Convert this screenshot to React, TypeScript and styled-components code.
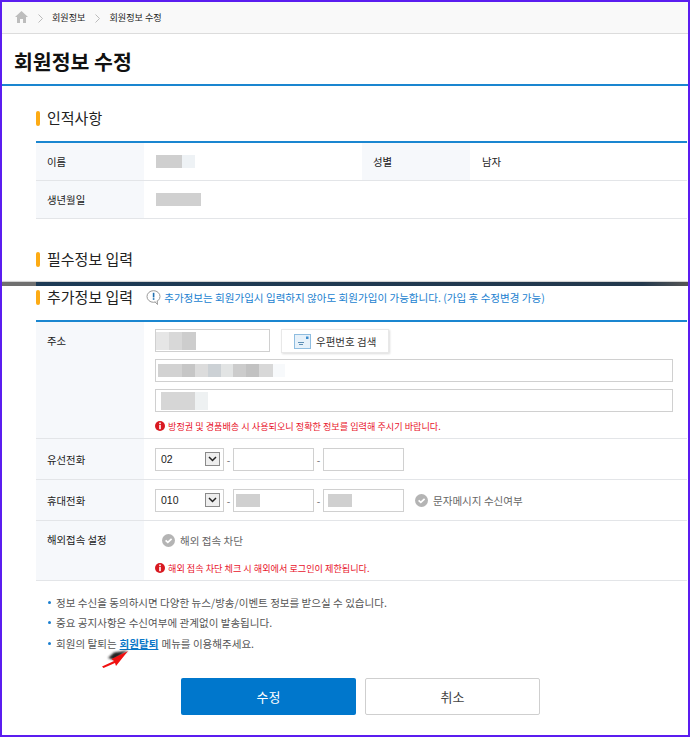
import React from "react";
import styled, { createGlobalStyle } from "styled-components";

const GlobalStyle = createGlobalStyle`
  html, body { margin: 0; padding: 0; background: #fff; }
  body { font-family: "Noto Sans CJK KR", "Noto Sans", sans-serif; color: #333; }
  * { box-sizing: border-box; }
`;

const Frame = styled.div`
  position: relative;
  width: 690px;
  height: 737px;
  border: 2px solid #5b1df0;
  overflow: hidden;
  background: #fff;
`;

const Breadcrumb = styled.nav`
  display: flex;
  align-items: center;
  height: 32px;
  padding: 0 0 1px 13px;
  background: #f9f9f9;
  border-bottom: 1px solid #dcdcdc;
  font-size: 9.1px;
  color: #222;
`;

const Chevron = styled.svg`
  width: 5px;
  height: 9px;
  margin: 2px 9px 0 10px;
`;

const TitleBar = styled.header`
  display: flex;
  align-items: center;
  height: 52px;
  padding: 3px 0 0 12px;
  border-bottom: 2px solid #1a86d0;
`;

const Title = styled.h1`
  margin: 0;
  font-size: 20.5px;
  font-weight: 700;
  color: #111;
`;

const Section = styled.section<{ $top: number }>`
  padding: ${(p) => p.$top}px 1px 0 34px;
`;

const HeadingRow = styled.div<{ $gap?: number }>`
  display: flex;
  align-items: center;
  height: 15px;
  margin-bottom: ${(p) => p.$gap ?? 15}px;
`;

const Heading = styled.h2`
  display: flex;
  align-items: center;
  margin: -2px 0 0;
  font-size: 15px;
  font-weight: 400;
  color: #222;
  &::before {
    content: "";
    width: 4px;
    height: 15px;
    margin: 2px 7px 0 0;
    border-radius: 2px;
    background: #fdab14;
  }
`;

const Hint = styled.span`
  display: flex;
  align-items: center;
  margin-left: 13px;
  font-size: 10.55px;
  color: #1a7fd0;
`;

const HintIcon = styled.svg`
  width: 15px;
  height: 15px;
  margin-right: 3px;
`;

const Table = styled.div`
  border-top: 2px solid #1a86d0;
`;

const Row = styled.div<{ $height: number }>`
  display: flex;
  height: ${(p) => p.$height}px;
  border-bottom: 1px solid #e3e5e8;
`;

const Label = styled.div<{ $top?: number }>`
  display: flex;
  align-items: ${(p) => (p.$top ? "flex-start" : "center")};
  flex: 0 0 108px;
  padding: ${(p) => p.$top ?? 0}px 0 0 11px;
  background: #f6f8fb;
  font-size: 10.4px;
  color: #222;
`;

const Value = styled.div`
  display: flex;
  align-items: center;
  flex: 0 0 218px;
  padding-left: 12px;
  font-size: 10.4px;
  color: #222;
`;

const Cell = styled.div<{ $top?: number }>`
  display: flex;
  flex-direction: column;
  flex: 1;
  padding: ${(p) => p.$top ?? 0}px 0 0 11px;
`;

const InlineRow = styled.div`
  display: flex;
  align-items: center;
  height: 100%;
`;

const BlurGroup = styled.span`
  display: flex;
`;

const Blur = styled.span<{ $width: number; $tone?: string; $height?: number }>`
  display: block;
  flex: none;
  width: ${(p) => p.$width}px;
  height: ${(p) => p.$height ?? 13}px;
  background: ${(p) => p.$tone ?? "#d0d0d0"};
  filter: blur(0.6px);
`;

const Input = styled.div<{ $width?: number; $inset?: number }>`
  display: flex;
  align-items: center;
  flex: ${(p) => (p.$width ? "none" : 1)};
  width: ${(p) => (p.$width ? `${p.$width}px` : "auto")};
  height: 23px;
  padding-left: ${(p) => p.$inset ?? 0}px;
  background: #fff;
  border: 1px solid #d0d0d0;
`;

const FieldLine = styled.div<{ $top: number }>`
  display: flex;
  margin: ${(p) => p.$top}px 14px 0 0;
`;

const SearchButton = styled.div`
  display: flex;
  align-items: center;
  width: 108px;
  height: 24px;
  margin-left: 11px;
  padding-left: 12px;
  background: #fff;
  border: 1px solid #e8e8e8;
  box-shadow: 1px 1px 2px rgba(0, 0, 0, 0.14);
  font-size: 10.5px;
  color: #333;
`;

const SearchIcon = styled.svg`
  width: 17px;
  height: 15px;
  margin-right: 5px;
`;

const Warning = styled.p<{ $top: number }>`
  display: flex;
  align-items: center;
  margin: ${(p) => p.$top}px 0 0;
  font-size: 9.13px;
  color: #e8132b;
`;

const WarningIcon = styled.svg`
  width: 10px;
  height: 10px;
  margin-right: 3px;
`;

const Select = styled.div`
  display: flex;
  align-items: center;
  justify-content: space-between;
  width: 69px;
  height: 23px;
  padding: 0 3px 0 5px;
  border: 1px solid #d0d0d0;
  font-family: "Liberation Sans", Arial, sans-serif;
  font-size: 10.5px;
  color: #222;
`;

const SelectArrow = styled.span`
  display: flex;
  align-items: center;
  justify-content: center;
  width: 15px;
  height: 14px;
  background: #eee;
  border: 1px solid #8a8a8a;
`;

const Dash = styled.span`
  width: 9px;
  text-align: center;
  font-size: 10px;
  color: #666;
`;

const Check = styled.span<{ $gap: number }>`
  display: flex;
  align-items: center;
  margin-left: ${(p) => p.$gap}px;
  font-size: 10.55px;
  color: #666;
`;

const CheckIcon = styled.svg`
  width: 13px;
  height: 13px;
  margin-right: 5px;
`;

const Seam = styled.div`
  height: 4px;
  margin-top: 15px;
  background: linear-gradient(to right, #6f6f6f 34px, #1c3a55 34px, #23384c 640px, #555 100%);
  box-shadow: 0 -1px 1px #ccc;
`;

const Notes = styled.ul`
  margin: 0;
  padding: 11px 0 0 46px;
  list-style: none;
  font-size: 10.55px;
  color: #555;
`;

const Note = styled.li`
  display: flex;
  align-items: center;
  height: 20.5px;
  &::before {
    content: "";
    width: 3px;
    height: 3px;
    margin-right: 5px;
    border-radius: 50%;
    background: #1a7fd0;
  }
`;

const NoteLink = styled.a`
  margin: 0 3px;
  font-weight: 700;
  color: #0a77c8;
  text-decoration: underline;
`;

const Actions = styled.div`
  display: flex;
  gap: 9px;
  margin-top: 24px;
  padding-left: 179px;
`;

const ActionButton = styled.div<{ $primary?: boolean }>`
  display: flex;
  align-items: center;
  justify-content: center;
  width: 175px;
  height: 37px;
  border-radius: 2px;
  font-size: 13px;
  background: ${(p) => (p.$primary ? "#0077cc" : "#fff")};
  color: ${(p) => (p.$primary ? "#fff" : "#444")};
  border: ${(p) => (p.$primary ? "none" : "1px solid #cfcfcf")};
`;

const PointerArrow = styled.svg`
  position: absolute;
  left: 98px;
  top: 643px;
  width: 36px;
  height: 26px;
`;

const CrumbChevron = () => (
  <Chevron viewBox="0 0 5 9">
    <path d="M0.5 0.5 L4.5 4.5 L0.5 8.5" fill="none" stroke="#bbb" strokeWidth="1" />
  </Chevron>
);

const WarnGlyph = () => (
  <WarningIcon viewBox="0 0 10 10">
    <circle cx="5" cy="5" r="5" fill="#d81920" />
    <rect x="4.2" y="1.6" width="1.6" height="1.6" fill="#fff" />
    <rect x="4.2" y="4" width="1.6" height="4.2" fill="#fff" />
  </WarningIcon>
);

const CheckGlyph = () => (
  <CheckIcon viewBox="0 0 13 13">
    <circle cx="6.5" cy="6.5" r="6.5" fill="#b4b4b4" />
    <path d="M3.6 6.4 L5.8 8.4 L9.6 4.8" fill="none" stroke="#fff" strokeWidth="1.7" />
  </CheckIcon>
);

const PhoneSelect = ({ value }: { value: string }) => (
  <Select>
    {value}
    <SelectArrow>
      <svg width="9" height="6" viewBox="0 0 9 6">
        <path d="M1 1 L4.5 4.5 L8 1" fill="none" stroke="#222" strokeWidth="1.5" />
      </svg>
    </SelectArrow>
  </Select>
);

const Smudge = ({ parts, height }: { parts: [number, string][]; height?: number }) => (
  <BlurGroup>
    {parts.map(([w, c], i) => (
      <Blur key={i} $width={w} $tone={c} $height={height} />
    ))}
  </BlurGroup>
);

export default function App() {
  return (
    <Frame>
      <GlobalStyle />
      <Breadcrumb>
        <svg width="13" height="12" viewBox="0 0 13 12">
          <path d="M6.5 0 L13 6 L11 6 L11 12 L8 12 L8 8 L5 8 L5 12 L2 12 L2 6 L0 6 Z" fill="#bdbdbd" />
        </svg>
        <CrumbChevron />
        <span>회원정보</span>
        <CrumbChevron />
        <span>회원정보 수정</span>
      </Breadcrumb>
      <TitleBar>
        <Title>회원정보 수정</Title>
      </TitleBar>

      <Section $top={25}>
        <HeadingRow>
          <Heading>인적사항</Heading>
        </HeadingRow>
        <Table>
          <Row $height={38}>
            <Label>이름</Label>
            <Value>
              <Smudge parts={[[26, "#cfcfcf"], [13, "#eef2f5"]]} />
            </Value>
            <Label>성별</Label>
            <Value>남자</Value>
          </Row>
          <Row $height={38}>
            <Label>생년월일</Label>
            <Value>
              <Blur $width={45} />
            </Value>
          </Row>
        </Table>
      </Section>

      <Section $top={33}>
        <HeadingRow $gap={0}>
          <Heading>필수정보 입력</Heading>
        </HeadingRow>
      </Section>
      <Seam />

      <Section $top={4}>
        <HeadingRow>
          <Heading>추가정보 입력</Heading>
          <Hint>
            <HintIcon viewBox="0 0 15 15">
              <ellipse cx="7.5" cy="6.5" rx="6.5" ry="5.8" fill="#fff" stroke="#9a9a9a" strokeWidth="1" />
              <path d="M9 11.8 L11.5 14.5 L11.2 10.8" fill="#fff" stroke="#9a9a9a" strokeWidth="1" />
              <rect x="6.8" y="2.8" width="1.6" height="4.6" fill="#1f6fb0" />
              <rect x="6.8" y="8.2" width="1.6" height="1.6" fill="#1f6fb0" />
            </HintIcon>
            추가정보는 회원가입시 입력하지 않아도 회원가입이 가능합니다. (가입 후 수정변경 가능)
          </Hint>
        </HeadingRow>
        <Table>
          <Row $height={117}>
            <Label $top={11}>주소</Label>
            <Cell $top={7}>
              <FieldLine $top={0}>
                <Input $width={115}>
                  <Smudge
                    parts={[[13, "#e6e6e6"], [13, "#d8d8d8"], [14, "#cdcdcd"]]}
                    height={18}
                  />
                </Input>
                <SearchButton>
                  <SearchIcon viewBox="0 0 17 15">
                    <rect x="0.5" y="0.5" width="16" height="14" fill="#e6f1fa" stroke="#8fbde0" />
                    <path d="M4 8.5 H10 M5 10.5 H9" stroke="#5d8fb5" strokeWidth="1" />
                    <rect x="12" y="2.5" width="2.5" height="2.5" fill="#3d8ccb" />
                  </SearchIcon>
                  우편번호 검색
                </SearchButton>
              </FieldLine>
              <FieldLine $top={6}>
                <Input $inset={2}>
                  <Smudge
                    parts={[
                      [24, "#d2d2d2"],
                      [13, "#c6c6c6"],
                      [13, "#dcdcdc"],
                      [13, "#ccd1d5"],
                      [12, "#e2e4e4"],
                      [13, "#cccccc"],
                      [13, "#c2c2c2"],
                      [14, "#d8d8d8"],
                      [12, "#f7f9fb"],
                    ]}
                  />
                </Input>
              </FieldLine>
              <FieldLine $top={7}>
                <Input $inset={5}>
                  <Smudge parts={[[34, "#d6d6d6"], [13, "#eef1f2"]]} height={18} />
                </Input>
              </FieldLine>
              <Warning $top={7}>
                <WarnGlyph />
                방정권 및 경품배송 시 사용되오니 정확한 정보를 입력해 주시기 바랍니다.
              </Warning>
            </Cell>
          </Row>
          <Row $height={41}>
            <Label>유선전화</Label>
            <Cell>
              <InlineRow>
                <PhoneSelect value="02" />
                <Dash>-</Dash>
                <Input $width={81} />
                <Dash>-</Dash>
                <Input $width={81} />
              </InlineRow>
            </Cell>
          </Row>
          <Row $height={41}>
            <Label>휴대전화</Label>
            <Cell>
              <InlineRow>
                <PhoneSelect value="010" />
                <Dash>-</Dash>
                <Input $width={81} $inset={2}>
                  <Blur $width={24} />
                </Input>
                <Dash>-</Dash>
                <Input $width={81} $inset={4}>
                  <Blur $width={24} />
                </Input>
                <Check $gap={11}>
                  <CheckGlyph />
                  문자메시지 수신여부
                </Check>
              </InlineRow>
            </Cell>
          </Row>
          <Row $height={60}>
            <Label $top={11}>해외접속 설정</Label>
            <Cell $top={12}>
              <Check $gap={7}>
                <CheckGlyph />
                해외 접속 차단
              </Check>
              <Warning $top={13}>
                <WarnGlyph />
                해외 접속 차단 체크 시 해외에서 로그인이 제한됩니다.
              </Warning>
            </Cell>
          </Row>
        </Table>
      </Section>

      <Notes>
        <Note>정보 수신을 동의하시면 다양한 뉴스/방송/이벤트 정보를 받으실 수 있습니다.</Note>
        <Note>중요 공지사항은 수신여부에 관계없이 발송됩니다.</Note>
        <Note>
          회원의 탈퇴는<NoteLink>회원탈퇴</NoteLink>메뉴를 이용해주세요.
        </Note>
      </Notes>

      <Actions>
        <ActionButton $primary>수정</ActionButton>
        <ActionButton>취소</ActionButton>
      </Actions>

      <PointerArrow viewBox="0 0 36 26">
        <defs>
          <filter id="arrow-shadow" x="-30%" y="-60%" width="160%" height="220%">
            <feGaussianBlur stdDeviation="1" />
          </filter>
        </defs>
        <path d="M8 13 L14 7.5 L28 5.5 L14 15 Z" fill="#222" filter="url(#arrow-shadow)" />
        <path d="M28 6 L11.5 14 L14 16 L2 21.5 L3.5 23 L15 18 L16 21 Z" fill="#f01010" />
      </PointerArrow>
    </Frame>
  );
}
